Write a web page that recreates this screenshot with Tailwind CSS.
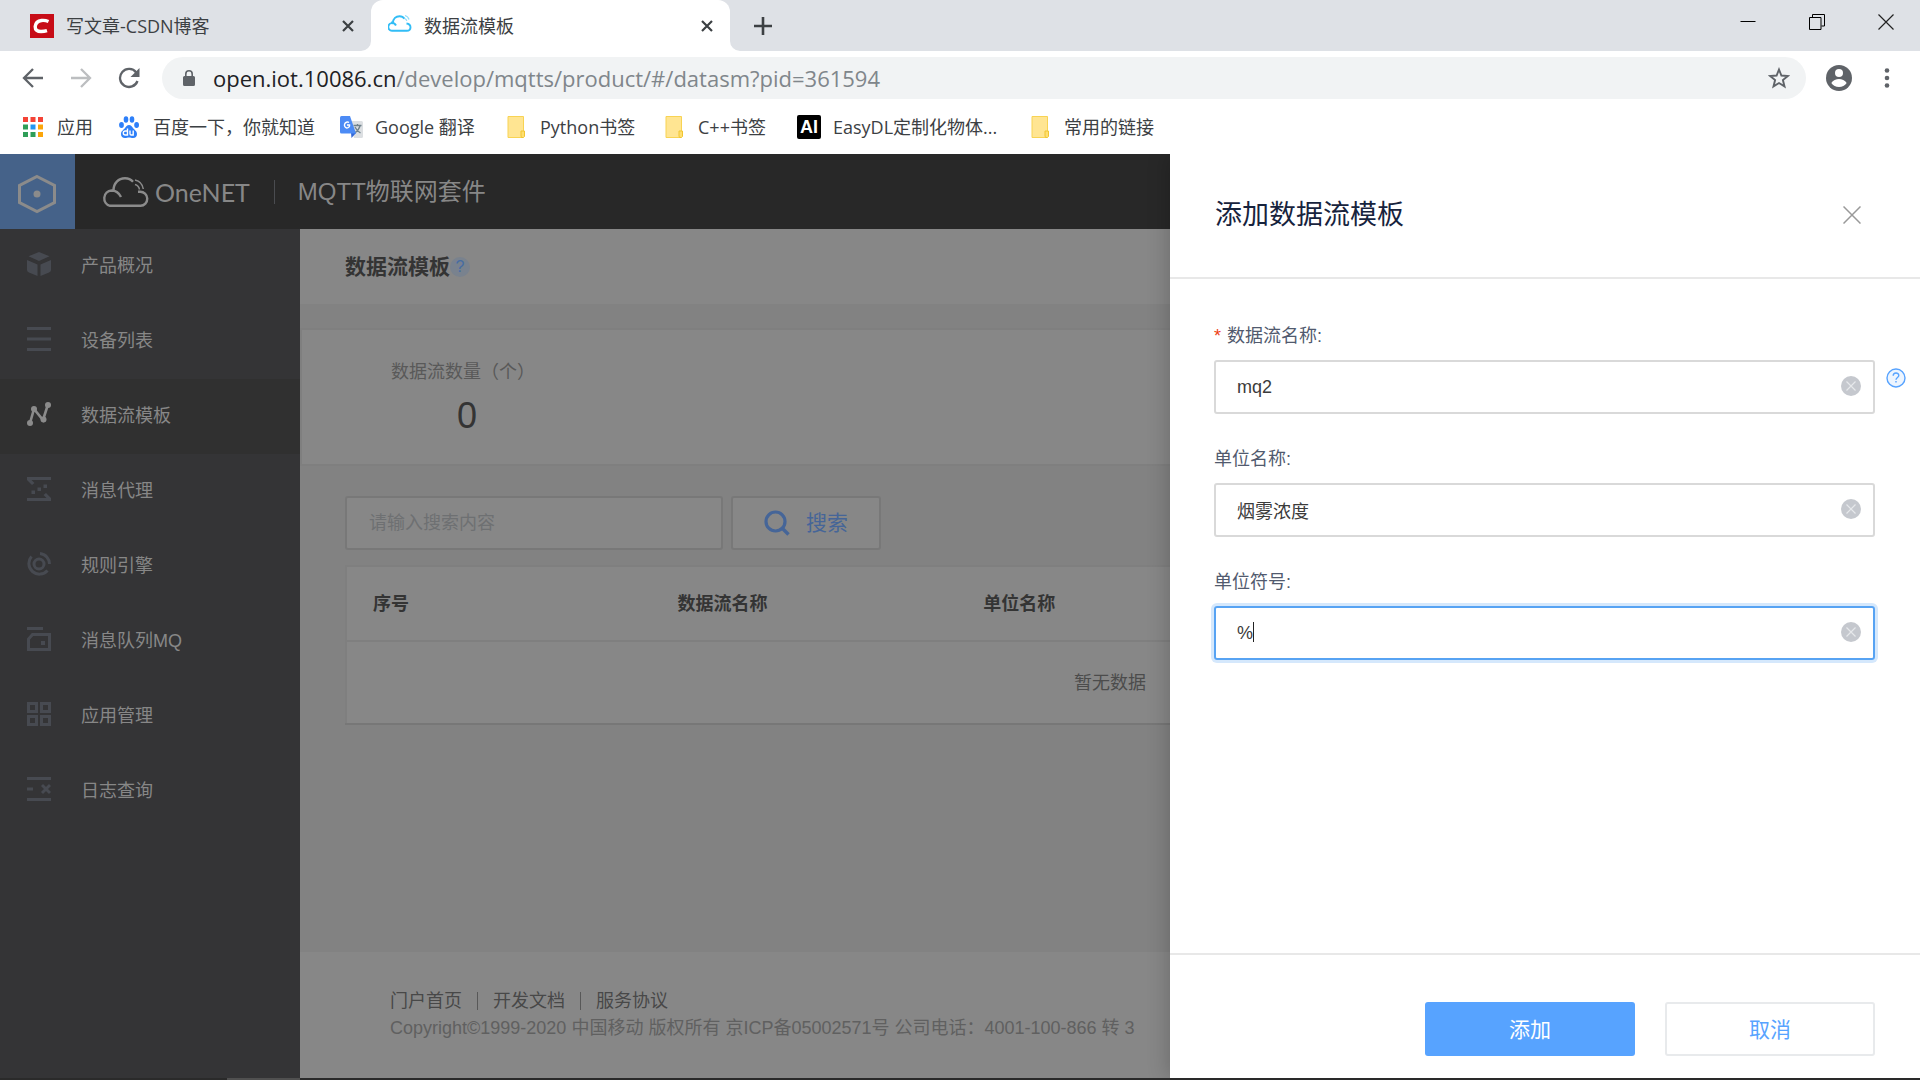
<!DOCTYPE html>
<html lang="zh-CN">
<head>
<meta charset="utf-8">
<title>数据流模板</title>
<script src="https://cdn.jsdelivr.net/npm/@tailwindcss/browser@4"></script>
</head>
<body class="flex h-screen flex-col overflow-hidden bg-white font-['Liberation_Sans','Noto_Sans_CJK_SC',sans-serif] text-[18px] leading-6">

<!-- Browser chrome -->
<header class="shrink-0 font-['Open_Sans','Noto_Sans_CJK_SC',sans-serif] text-[#3c4043]">
  <div class="flex h-[51px] bg-[#dee1e6]">
    <div class="flex w-[371px] shrink-0 items-center pl-[30px] pr-[15px]">
      <svg class="h-6 w-6" viewBox="0 0 24 24"><path fill="#c70c17" d="M0 0h24v24H0z"/><path d="M18.500 7.500C16 6.500 14 6.200 11.500 6.500 7.500 7 5.500 9.500 5.200 12.500 5 16 7.500 17.500 11 17.500c2 0 4-.2 6-.8" fill="none" stroke="#fff" stroke-width="3.400"/></svg>
      <span class="ml-3 grow">写文章-CSDN博客</span>
      <button aria-label="关闭标签页" class="flex h-4 w-4 items-center justify-center"><svg class="h-3 w-3" viewBox="0 0 12 12"><path d="M1 1l10 10M11 1L1 11" stroke="#3c4043" stroke-width="2.200"/></svg></button>
    </div>
    <div class="relative flex w-[359px] shrink-0 items-center rounded-t-xl bg-white pl-[17px] pr-[15px]">
      <svg class="absolute -left-[10px] bottom-0 h-[10px] w-[10px]" viewBox="0 0 10 10"><path fill="#fff" d="M10 0v10H0A10 10 0 0010 0z"/></svg>
      <svg class="absolute -right-[10px] bottom-0 h-[10px] w-[10px]" viewBox="0 0 10 10"><path fill="#fff" d="M0 0v10h10A10 10 0 010 0z"/></svg>
      <svg class="mb-1 h-5 w-6" viewBox="0 0 24 20"><path d="M3.500 16.800A3.800 3.800 0 014.800 9.200C5 4.500 8 2.200 11.500 2.200c2.300 0 4 1 5 2.500M18.500 9.500c2.500.3 4 2 4 3.800 0 2-1.500 3.500-3.700 3.500H3.500M3 8.500c2 0 4 1 5 3" fill="none" stroke="#32bdf6" stroke-width="1.900"/><path d="M17 1.500c2 .6 3.500 2 4 4M16.500 4.500c1.200.4 2 1.200 2.300 2.300" fill="none" stroke="#8fdcf9" stroke-width="1.300"/></svg>
      <span class="ml-3 grow">数据流模板</span>
      <button aria-label="关闭标签页" class="flex h-4 w-4 items-center justify-center"><svg class="h-3 w-3" viewBox="0 0 12 12"><path d="M1 1l10 10M11 1L1 11" stroke="#3c4043" stroke-width="2.200"/></svg></button>
    </div>
    <button aria-label="新标签页" class="ml-6 flex items-center"><svg class="h-[18px] w-[18px]" viewBox="0 0 18 18"><path d="M9 0v18M0 9h18" stroke="#3c4043" stroke-width="2.600"/></svg></button>
    <div class="ml-auto flex h-[43px] items-center gap-[53px] pr-[26px]">
      <button aria-label="最小化"><svg class="h-4 w-4" viewBox="0 0 16 16"><path d="M.5 7.500h15" stroke="#000"/></svg></button>
      <button aria-label="还原"><svg class="h-4 w-4" viewBox="0 0 16 16"><path d="M.5 3.500h11.500v12H.5zM3.500 3.500V.5h12v11.500H12.500" fill="none" stroke="#000"/></svg></button>
      <button aria-label="关闭"><svg class="h-4 w-4" viewBox="0 0 16 16"><path d="M.5.5l15 15M15.500.5l-15 15" stroke="#222" stroke-width="1.200"/></svg></button>
    </div>
  </div>

  <div class="flex h-[54px] items-center pl-[22px] pr-[27px]">
    <button aria-label="后退"><svg class="h-[22px] w-[22px]" viewBox="0 0 22 22"><path d="M21 11H2.500M11 2L2 11l9 9" fill="none" stroke="#5f6368" stroke-width="2.300"/></svg></button>
    <button aria-label="前进" class="ml-[26px]"><svg class="h-[22px] w-[22px]" viewBox="0 0 22 22"><path d="M1 11h18.500M11 2l9 9-9 9" fill="none" stroke="#bcbec0" stroke-width="2.300"/></svg></button>
    <button aria-label="重新加载" class="ml-[26px]"><svg class="h-[22px] w-[22px]" viewBox="0 0 22 22"><path d="M18.200 5.500A9 9 0 1019.500 14" fill="none" stroke="#5f6368" stroke-width="2.300"/><path d="M21.500 1v9h-9z" fill="#5f6368"/></svg></button>
    <div class="ml-[22px] flex h-[42px] grow items-center rounded-full bg-[#f1f3f4] pl-[21px] pr-4">
      <svg class="h-4 w-3" viewBox="0 0 12 16"><path fill="#5f6368" d="M1.500 6H2V4a4 4 0 018 0v2h.5A1.500 1.500 0 0112 7.500v7a1.500 1.500 0 01-1.500 1.500h-9A1.500 1.500 0 010 14.500v-7A1.500 1.500 0 011.500 6zM3.600 6h4.800V4a2.400 2.400 0 00-4.800 0z"/></svg>
      <span class="ml-[18px] grow text-[22px] text-[#80868b]"><span class="text-[#202124]">open.iot.10086.cn</span>/develop/mqtts/product/#/datasm?pid=361594</span>
      <button aria-label="为此网页添加书签"><svg class="h-[22px] w-[22px]" viewBox="0 0 22 22"><path d="M11 2.500l2.400 6 6.400.5-4.900 4.100 1.600 6.300L11 16l-5.500 3.400 1.600-6.300L2.200 9l6.400-.5z" fill="none" stroke="#5f6368" stroke-width="1.900"/></svg></button>
    </div>
    <button aria-label="用户" class="ml-5"><svg class="h-[26px] w-[26px]" viewBox="0 0 26 26"><circle cx="13" cy="13" r="13" fill="#5f6368"/><circle cx="13" cy="8" r="4" fill="#fff"/><path fill="#fff" d="M5.300 18c1.500-2.600 5-4 7.700-4s6.200 1.400 7.700 4A9.400 9.400 0 0113 22a9.400 9.400 0 01-7.700-4z"/></svg></button>
    <button aria-label="菜单" class="ml-[29px]"><svg class="h-[22px] w-[12px]" viewBox="0 0 12 22"><g fill="#5f6368"><circle cx="6" cy="3.500" r="2.300"/><circle cx="6" cy="11" r="2.300"/><circle cx="6" cy="18.500" r="2.300"/></g></svg></button>
  </div>

  <nav class="flex h-[49px] items-center pb-1.5 pl-[23px] whitespace-nowrap">
    <a href="#" class="flex w-24 items-center"><svg class="mr-3.5 h-5 w-5" viewBox="0 0 20 20"><path fill="#f44336" d="M0 0h5v5H0zM7.500 0h5v5h-5zM15 0h5v5h-5z"/><path fill="#2f9e58" d="M0 7.500h5v5H0zM0 15h5v5H0zM7.500 15h5v5h-5z"/><path fill="#2196f3" d="M7.500 7.500h5v5h-5z"/><path fill="#fba50a" d="M15 7.500h5v5h-5zM15 15h5v5h-5z"/></svg>应用</a>
    <a href="#" class="flex w-[221px] items-center"><svg class="mr-3.5 h-[22px] w-5" viewBox="0 0 20 22"><g fill="#2d7ff9"><ellipse cx="2.500" cy="9" rx="2.400" ry="3"/><ellipse cx="7" cy="3.500" rx="2.300" ry="3.300"/><ellipse cx="13" cy="3.500" rx="2.300" ry="3.300"/><ellipse cx="17.600" cy="9" rx="2.400" ry="3"/><path d="M10 9c2 0 3 1.500 4 3 1.500 2 4 3 4 6 0 2.500-1.500 4-4 4-1.500 0-2.500-.5-4-.5s-2.500.5-4 .5c-2.500 0-4-1.500-4-4 0-3 2.500-4 4-6 1-1.500 2-3 4-3z"/></g><path d="M8.500 12.500v6.500H6.300a2 2 0 010-4h2M11 14.500v3.300q0 1.200 1.200 1.200h2v-4.500" fill="none" stroke="#fff" stroke-width="1.400"/></svg>百度一下，你就知道</a>
    <a href="#" class="flex w-[167px] items-center"><svg class="mr-3 h-[22px] w-[23px]" viewBox="0 0 23 22"><path fill="#dcdfe2" d="M10 5h11.500Q23 5 23 6.500v14q0 1.500-1.500 1.500H14z"/><path d="M13.500 9.500h8M17.500 8v1.500M20 10c-1 3.500-3 5.500-5.500 7M15 11c1 2.500 3 4.500 5.500 6" fill="none" stroke="#70828c" stroke-width="1.300"/><path fill="#3367d6" d="M11 17h5l-4.500 5z"/><path fill="#4c8bf5" d="M1.500 0H10l6 17.500H1.500Q0 17.500 0 16V1.500Q0 0 1.500 0z"/><path d="M9 6.500A3 3 0 106.800 12 2.700 2.700 0 009.600 9H7" fill="none" stroke="#fff" stroke-width="1.400"/></svg>Google 翻译</a>
    <a href="#" class="flex w-[158px] items-center"><svg class="mr-[15px] h-[22px] w-[18px]" viewBox="0 0 18 22"><path fill="#ffe592" stroke="#f8d353" d="M1 .5h15.500v20l-1 1H1z"/><path fill="#ffdf70" stroke="#f1c531" d="M14 20v-5h3.500v5.500l-1 1H14.500z"/></svg>Python书签</a>
    <a href="#" class="flex w-[132px] items-center"><svg class="mr-[15px] h-[22px] w-[18px]" viewBox="0 0 18 22"><path fill="#ffe592" stroke="#f8d353" d="M1 .5h15.500v20l-1 1H1z"/><path fill="#ffdf70" stroke="#f1c531" d="M14 20v-5h3.500v5.500l-1 1H14.500z"/></svg>C++书签</a>
    <a href="#" class="flex w-[234px] items-center"><span class="mr-3 flex h-6 w-6 items-center justify-center rounded-[2px] bg-black font-['Liberation_Sans',sans-serif] text-[18px] font-bold text-white">AI</span>EasyDL定制化物体...</a>
    <a href="#" class="flex items-center"><svg class="mr-[15px] h-[22px] w-[18px]" viewBox="0 0 18 22"><path fill="#ffe592" stroke="#f8d353" d="M1 .5h15.500v20l-1 1H1z"/><path fill="#ffdf70" stroke="#f1c531" d="M14 20v-5h3.500v5.500l-1 1H14.500z"/></svg>常用的链接</a>
  </nav>
</header>

<!-- Web page -->
<div class="relative flex min-h-0 grow flex-col overflow-hidden bg-[#828282]">
  <div class="flex h-[75px] shrink-0 items-center bg-[#282828] text-[#878787]">
    <a href="#" aria-label="控制台" class="flex h-[75px] w-[75px] items-center justify-center bg-[#456289] pr-0.5"><svg class="mt-1 h-10 w-10" viewBox="0 0 40 40"><path d="M20 2.500l17.500 9v17L20 37.500l-17.500-9v-17z" fill="none" stroke="#8b8b8b" stroke-width="3"/><circle cx="20" cy="20" r="3.500" fill="#8b8b8b"/></svg></a>
    <a href="#" class="ml-[26px] flex items-center font-[Lato,sans-serif] text-[25px]">
      <svg class="mr-1.5 h-[30px] w-12" viewBox="0 0 48 30"><path d="M20 20C17.500 15 14 13.500 10.500 13.500A7.800 7.800 0 009 28.800H39.500A7 7 0 0039 14.800H37M12.500 13.500C12.500 6 17.500 1.300 24 1.300c3.300 0 6 1.200 8 3.500" fill="none" stroke="#8b8b8b" stroke-width="2.400"/><path d="M34 3c4.500 1 7.500 4 8.300 9M34 7.500c2.500.7 4 2.500 4.500 5" fill="none" stroke="#8b8b8b" stroke-width="1.500"/></svg>OneNET</a>
    <span class="ml-6 h-6 w-px bg-[#4a4c50]"></span>
    <span class="ml-[23px] text-[24px]">MQTT物联网套件</span>
  </div>

  <div class="flex min-h-0 grow">
    <nav class="w-[300px] shrink-0 bg-[#343436] text-[#878787] [&>a]:flex [&>a]:h-[75px] [&>a]:items-center [&>a]:gap-[30px] [&>a]:pb-px [&>a]:pl-[27px] [&_svg]:mb-1 [&_svg]:h-6 [&_svg]:w-6 [&_svg]:text-[#474a51]">
      <a href="#"><svg viewBox="0 0 24 24" fill="currentColor"><path d="M1.500 4.300L12 0l10.500 4.300L12 9zM0 8l10.500 4.500V24L2 20.500Q0 19.800 0 18zM24 8l-10.500 4.500V24l8.500-3.500q2-.7 2-2.500z"/></svg>产品概况</a>
      <a href="#"><svg viewBox="0 0 24 24" fill="currentColor"><path d="M0 0h24v3H0zM0 10.500h24v3H0zM0 21h24v3H0z"/></svg>设备列表</a>
      <a href="#" class="bg-[#303030]"><svg viewBox="0 0 24 24"><path d="M3 21L7 7l9 11 4.800-15" fill="none" stroke="#8b8b8b" stroke-width="2.600"/><g fill="#8b8b8b"><circle cx="3" cy="21" r="3"/><circle cx="7" cy="7" r="3"/><circle cx="16.500" cy="17.500" r="3"/><circle cx="21" cy="3" r="3"/></g></svg>数据流模板</a>
      <a href="#"><svg viewBox="0 0 24 24" fill="currentColor"><path d="M0 0h24v3H4.500L7.500 6 5 8 0 3zM24 24H0v-3h19.500l-3-3L19 16l5 5zM4.500 13.500H8V17H4.500zM10.500 10.500H14V14h-3.500zM16.500 7.500H20V11h-3.500z"/></svg>消息代理</a>
      <a href="#"><svg viewBox="0 0 24 24" fill="none" stroke="currentColor" stroke-width="3"><circle cx="12" cy="12" r="5"/><path d="M4.500 4.500A10.500 10.500 0 0020.500 18.500M13 1.500A10.500 10.500 0 0122.500 12"/></svg>规则引擎</a>
      <a href="#"><svg viewBox="0 0 24 24"><path d="M0 1.500h16M1.500 22.500V12l4-4.500h17v15z" fill="none" stroke="currentColor" stroke-width="3"/><path d="M14 14h4v4h-4z" fill="currentColor"/></svg>消息队列MQ</a>
      <a href="#"><svg viewBox="0 0 24 24" fill="none" stroke="currentColor" stroke-width="3"><path d="M1.500 1.500h8v8h-8zM14.500 1.500h8v8h-8zM1.500 14.500h8v8h-8zM14.500 14.500h8v8h-8z"/></svg>应用管理</a>
      <a href="#"><svg viewBox="0 0 24 24" fill="none" stroke="currentColor" stroke-width="3"><path d="M0 1.500h24M0 22.500h24M0 12h6M15 8l8 8M23 8l-8 8"/></svg>日志查询</a>
    </nav>

    <main class="flex min-w-0 grow flex-col">
      <div class="flex h-[75px] shrink-0 items-center bg-[#878787] pl-[45px]">
        <h1 class="text-[21px] font-bold text-[#343434]">数据流模板</h1>
        <span class="flex h-5 w-5 items-center justify-center rounded-full bg-[#79828e] text-[16px] text-[#456ca3]">?</span>
      </div>
      <section class="mt-6 h-[138px] shrink-0 border-2 border-[#7f7f7f] bg-[#878787] pt-[30px] pl-[89px]">
        <div class="w-[152px]">
          <p class="text-[#595959]">数据流数量（个）</p>
          <p class="mt-3 text-center text-[36px] leading-10 text-[#343434]">0</p>
        </div>
      </section>
      <form class="mt-[30px] flex gap-2 pl-[45px]">
        <input type="text" aria-label="搜索" placeholder="请输入搜索内容" class="h-[54px] w-[378px] rounded-[3px] border-2 border-[#787878] bg-[#878787] px-[22px] placeholder:text-[#6e7072]">
        <button type="button" class="flex h-[54px] w-[150px] items-center justify-center gap-4 rounded-[3px] border-2 border-[#787878] bg-[#878787] text-[21px] text-[#456598]"><svg class="h-[26px] w-[26px]" viewBox="0 0 26 26"><circle cx="11.500" cy="11.500" r="9.500" fill="none" stroke="currentColor" stroke-width="3.200"/><path d="M18.500 18.500l6 6" stroke="currentColor" stroke-width="3.400"/></svg>搜索</button>
      </form>
      <div class="mt-[15px] mx-[45px]">
        <table class="w-full table-fixed border-collapse border-2 border-b-[#777777] border-[#7f7f7f] bg-[#878787]">
          <thead><tr class="h-[75px] border-b-2 border-[#7f7f7f] text-left text-[#343434] [&>th]:pl-[26px]"><th>序号</th><th>数据流名称</th><th>单位名称</th><th>单位符号</th><th>操作</th></tr></thead>
          <tbody><tr class="h-[83px] text-center text-[#4c4c4c]"><td colspan="5">暂无数据</td></tr></tbody>
        </table>
      </div>
      <footer class="mt-auto h-[126px] shrink-0 bg-[#878787] pt-[37px] pl-[90px] text-[#606060]">
        <div class="flex items-center text-[#484848]">
          <a href="#">门户首页</a><span class="mx-[15px] h-[18px] w-px bg-[#585858]"></span><a href="#">开发文档</a><span class="mx-[15px] h-[18px] w-px bg-[#585858]"></span><a href="#">服务协议</a>
        </div>
        <p class="mt-[3px]">Copyright©1999-2020 中国移动 版权所有 京ICP备05002571号 公司电话：4001-100-866 转 3</p>
      </footer>
    </main>
  </div>

  <!-- Drawer -->
  <aside role="dialog" aria-labelledby="drawer-title" class="absolute inset-y-0 right-0 flex w-[750px] flex-col bg-white shadow-[-2px_0_20px_rgba(0,0,0,0.2)]">
    <div class="flex h-[125px] shrink-0 items-center justify-between border-b-2 border-[#e8e8e8] pb-0.5 pl-[45px] pr-[59px]">
      <h2 id="drawer-title" class="text-[27px] leading-9 text-[#17233d]">添加数据流模板</h2>
      <button aria-label="关闭"><svg class="h-[18px] w-[18px]" viewBox="0 0 18 18"><path d="M.5.5l17 17M17.500.5l-17 17" stroke="#999" stroke-width="1.500"/></svg></button>
    </div>
    <form class="flex grow flex-col gap-[33px] pt-[45px] pr-[45px] pl-11 text-[#515a6e]">
      <div>
        <label for="name" class="flex h-6 items-center"><span class="mr-1.5 text-[#ed4014]">*</span>数据流名称:</label>
        <div class="relative mt-3">
          <input id="name" type="text" value="mq2" class="h-[54px] w-full rounded-[3px] border-2 border-[#d9d9d9] px-[21px] text-[#3b3b3b]">
          <button type="button" aria-label="清除" class="absolute top-4 right-3.5"><svg class="h-5 w-5" viewBox="0 0 20 20"><circle cx="10" cy="10" r="10" fill="#c5c8ce"/><path d="M5.500 5.500l9 9M14.500 5.500l-9 9" stroke="#e6e8eb" stroke-width="1.200"/></svg></button>
          <button type="button" aria-label="帮助" class="absolute top-2 -right-[31px]"><svg class="h-5 w-5" viewBox="0 0 20 20"><circle cx="10" cy="10" r="9" fill="#edf5ff" stroke="#57a3ff" stroke-width="1.400"/><path d="M7.200 7.700c0-3.600 5.600-3.500 5.600-.3 0 2-2.800 2.100-2.800 4.300M10 13v1.600" fill="none" stroke="#57a3ff" stroke-width="1.400"/></svg></button>
        </div>
      </div>
      <div>
        <label for="unit" class="flex h-6 items-center">单位名称:</label>
        <div class="relative mt-3">
          <input id="unit" type="text" value="烟雾浓度" class="h-[54px] w-full rounded-[3px] border-2 border-[#d9d9d9] px-[21px] text-[#3b3b3b]">
          <button type="button" aria-label="清除" class="absolute top-4 right-3.5"><svg class="h-5 w-5" viewBox="0 0 20 20"><circle cx="10" cy="10" r="10" fill="#c5c8ce"/><path d="M5.500 5.500l9 9M14.500 5.500l-9 9" stroke="#e6e8eb" stroke-width="1.200"/></svg></button>
        </div>
      </div>
      <div>
        <label for="symbol" class="flex h-6 items-center">单位符号:</label>
        <div class="relative mt-3">
          <input id="symbol" type="text" value="%" class="h-[54px] w-full rounded-[3px] border-2 border-[#57a3f3] px-[21px] text-[#3b3b3b] shadow-[0_0_0_3px_#d5e8fc] outline-none">
          <span class="absolute top-4 left-[39px] h-5 w-px bg-[#222]"></span>
          <button type="button" aria-label="清除" class="absolute top-4 right-3.5"><svg class="h-5 w-5" viewBox="0 0 20 20"><circle cx="10" cy="10" r="10" fill="#c5c8ce"/><path d="M5.500 5.500l9 9M14.500 5.500l-9 9" stroke="#e6e8eb" stroke-width="1.200"/></svg></button>
        </div>
      </div>
    </form>
    <div class="flex h-[125px] shrink-0 items-start justify-end gap-[30px] border-t-2 border-[#e8e8e8] pt-[47px] pr-[45px] text-[21px]">
      <button class="h-[54px] w-[210px] rounded-[3px] bg-[#57a3ff] pt-0.5 text-white">添加</button>
      <button class="h-[54px] w-[210px] rounded-[3px] border-2 border-[#e8eaec] pt-0.5 text-[#57a3ff]">取消</button>
    </div>
  </aside>
</div>

<div class="h-0.5 shrink-0 bg-[#2a2a2a] pl-[227px]"><div class="h-0.5 w-[73px] bg-[#505050]"></div></div>
</body>
</html>
